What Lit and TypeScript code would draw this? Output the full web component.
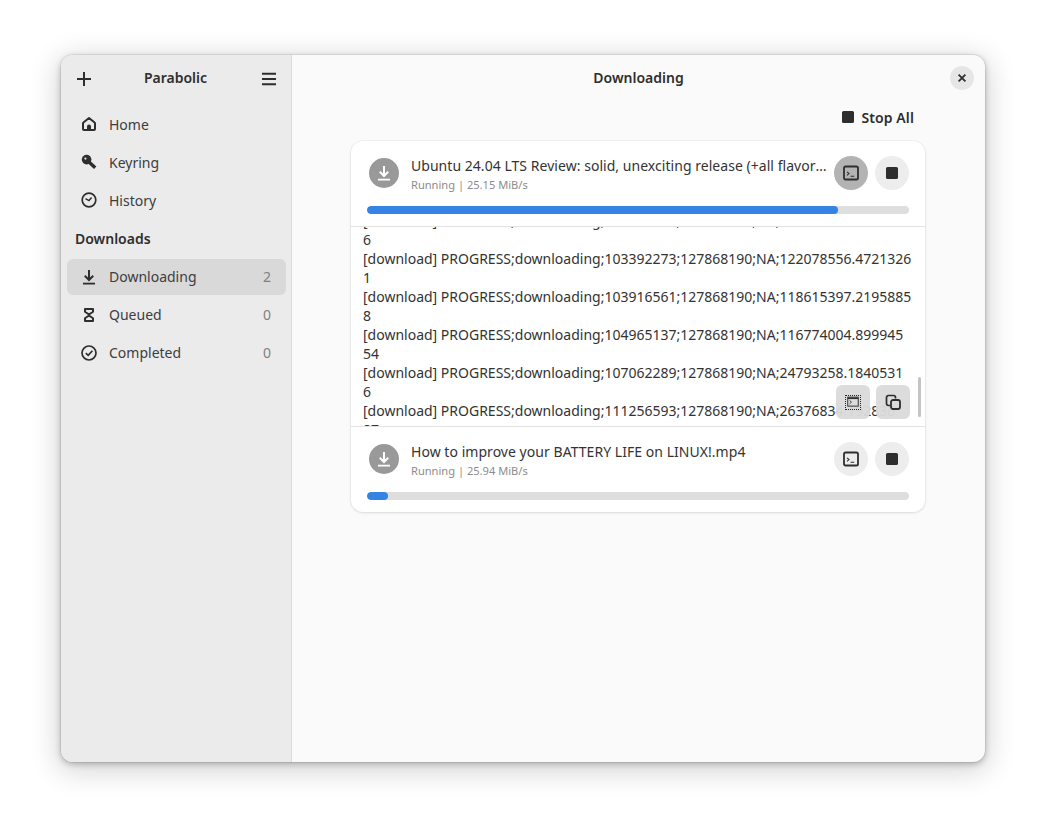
import { LitElement, html, css, svg } from "lit";
import { customElement } from "lit/decorators.js";

const icon = (body: unknown, size = 16) => html`<svg class="ic" width=${size} height=${size} viewBox="0 0 16 16" fill="none" stroke="currentColor" stroke-width="2">${body}</svg>`;

const plus = svg`<path d="M8 1v14M1 8h14"/>`;
const menu = svg`<path d="M1 2.700h14M1 8h14M1 13.300h14"/>`;
const home = svg`<path d="M8 2 2.400 6.500a1 1 0 0 0-.4.800V13a1 1 0 0 0 1 1h10a1 1 0 0 0 1-1V7.300a1 1 0 0 0-.4-.8z" stroke-width="2" stroke-linejoin="round"/><path d="M6 14v-3.500a2 2 0 0 1 4 0V14z" fill="currentColor" stroke="none"/>`;
const key = svg`<circle cx="5.600" cy="5.600" r="4.800" fill="currentColor" stroke="none"/><path d="M8 8l6.200 5.800" stroke-width="3.400"/><circle cx="4.400" cy="4.600" r="1.100" fill="#ebebeb" stroke="none"/>`;
const clock = svg`<circle cx="8" cy="8" r="6.800" stroke-width="1.700"/><path d="M4.500 6.600 8 8.600l2.600-3" stroke-width="1.500"/>`;
const down = svg`<path d="M8 1v9.500M3.800 6.800 8 11l4.200-4.200" stroke-width="2"/><path d="M2 14.600h12" stroke-width="1.800"/>`;
const glass = svg`<path d="M4 2h8v2.700L8 7.500 4 4.700zM4 14h8v-2.700L8 8.500 4 11.300z" stroke-width="2" stroke-linejoin="round"/>`;
const check = svg`<circle cx="8" cy="8" r="7" stroke-width="1.700"/><path d="M4.800 8.200 7.200 10.400 11.400 5.800" stroke-width="1.700"/>`;
const term = svg`<rect x="1" y="1.500" width="14" height="13" rx="1.600" stroke-width="1.800"/><path d="M4 6.800l2 1.800-2 1.800" stroke-width="1.100"/><path d="M7.600 11.200h3.600" stroke-width="1.100"/>`;
const termSmall = svg`<rect x="1" y="1.500" width="14" height="12" stroke-width="1.300"/><path d="M1 3h14" stroke-width="2.200"/><path d="M3.500 6l2.400 2.200-2.400 2.200" stroke-width="1.200"/>`;
const stop = svg`<rect x="2" y="2" width="12" height="12" rx="1.600" fill="currentColor" stroke="none"/>`;
const copy = svg`<path d="M5 11.500H3.400A1.900 1.900 0 0 1 1.500 9.600V3.400a1.900 1.900 0 0 1 1.900-1.900h5.200A1.900 1.900 0 0 1 10.500 3.400V4.500" stroke-width="1.700"/><rect x="6" y="6" width="9" height="9" rx="2" stroke-width="1.800"/>`;
const close = svg`<path d="M3.500 3.500l9 9M12.500 3.500l-9 9" stroke-width="2.400"/>`;

const LOG = [
  "[download] PROGRESS;downloading;102343697;127868190;NA;120412355.2210541",
  "6",
  "[download] PROGRESS;downloading;103392273;127868190;NA;122078556.4721326",
  "1",
  "[download] PROGRESS;downloading;103916561;127868190;NA;118615397.2195885",
  "8",
  "[download] PROGRESS;downloading;104965137;127868190;NA;116774004.899945",
  "54",
  "[download] PROGRESS;downloading;107062289;127868190;NA;24793258.1840531",
  "6",
  "[download] PROGRESS;downloading;111256593;127868190;NA;26376834.192836",
  "87",
];

@customElement("app-root")
export class AppRoot extends LitElement {
  static styles = css`
    :host {
      display: block;
      padding: 55px 61px;
      background: #fff;
      font-family: "Noto Sans", sans-serif;
      font-size: 14px;
      color: #2e2e2e;
    }
    .ic { display: block; flex: none; }
    .window {
      width: 924px;
      height: 707px;
      display: flex;
      border-radius: 12px;
      overflow: hidden;
      background: #fafafa;
      box-shadow: 0 0 0 1px rgba(0,0,0,.06), 0 2px 6px rgba(0,0,0,.25), 0 6px 28px 4px rgba(0,0,0,.16);
    }
    .sidebar {
      width: 230px;
      flex: none;
      background: #ebebeb;
      border-right: 1px solid #dcdcdc;
      display: flex;
      flex-direction: column;
    }
    .side-head {
      height: 47px;
      box-sizing: border-box;
      padding: 0 14px 2px 15px;
      display: flex;
      align-items: center;
      justify-content: space-between;
      font-weight: 600;
      font-size: 14px;
      color: #2e2e2e;
    }
    .side-head .ic { margin-top: 2px; }
    .side-head span { margin-right: 2px; }
    .nav {
      display: flex;
      flex-direction: column;
      gap: 2px;
      padding: 4px 5px 0 6px;
    }
    .row {
      height: 36px;
      border-radius: 6px;
      display: flex;
      align-items: center;
      padding: 0 15px 0 14px;
      gap: 12px;
      color: #3d3d3d;
    }
    .row.sel { background: #d9d9d9; }
    .row .ic { color: #2e2e2e; }
    .row .label { flex: 1; }
    .row.low .label, .row.low .count { margin-bottom: 2px; }
    .row .count { color: #808080; }
    .heading {
      height: 37px;
      display: flex;
      align-items: center;
      padding-left: 8px;
      font-weight: 600;
      color: #2e2e2e;
    }
    .main {
      flex: 1;
      min-width: 0;
      display: flex;
      flex-direction: column;
    }
    .main-head {
      height: 47px;
      box-sizing: border-box;
      padding-bottom: 2px;
      display: flex;
      align-items: center;
      justify-content: center;
      font-weight: 600;
      position: relative;
    }
    .close {
      position: absolute;
      right: 11px;
      top: 11px;
      width: 24px;
      height: 24px;
      border-radius: 50%;
      background: #e6e6e6;
      display: flex;
      align-items: center;
      justify-content: center;
      color: #2e2e2e;
    }
    .content {
      width: 574px;
      margin: 0 60px 0 59px;
      display: flex;
      flex-direction: column;
    }
    .toolbar {
      height: 39px;
      display: flex;
      justify-content: flex-end;
      align-items: flex-start;
      padding-right: 11px;
    }
    .stop-all {
      display: flex;
      align-items: center;
      gap: 5px;
      height: 30px;
      font-weight: 600;
      color: #2e2e2e;
      letter-spacing: .1px;
    }
    .card {
      background: #fff;
      border-radius: 12px;
      box-shadow: 0 0 0 1px rgba(0,0,0,.03), 0 1px 3px rgba(0,0,0,.1);
      overflow: hidden;
    }
    .item {
      height: 85px;
      box-sizing: border-box;
      padding: 15px 16px 0;
      display: flex;
      flex-direction: column;
      gap: 16px;
    }
    .item-top {
      display: flex;
      align-items: center;
      height: 34px;
    }
    .badge {
      width: 30px;
      height: 30px;
      margin: 0 2px;
      border-radius: 50%;
      background: #999;
      color: #fff;
      display: flex;
      align-items: center;
      justify-content: center;
      flex: none;
    }
    .text {
      flex: 1;
      min-width: 0;
      margin: 0 6px 0 10px;
      padding-top: 4px;
    }
    .title {
      white-space: nowrap;
      overflow: hidden;
      text-overflow: ellipsis;
      line-height: 20px;
      letter-spacing: .04px;
      color: #333;
    }
    .sub {
      font-size: 11.100px;
      line-height: 18px;
      color: #8c8c8c;
    }
    .btns { display: flex; gap: 7px; flex: none; }
    .circle {
      width: 34px;
      height: 34px;
      border-radius: 50%;
      background: #ededed;
      display: flex;
      align-items: center;
      justify-content: center;
      color: #2e2e2e;
    }
    .circle.on { background: #b3b3b3; }
    .trough {
      height: 8px;
      border-radius: 4px;
      background: #dedede;
      overflow: hidden;
    }
    .fill {
      height: 100%;
      border-radius: 4px;
      background: #3584e4;
    }
    .log-wrap {
      position: relative;
      height: 199px;
      overflow: hidden;
      border-top: 1px solid #e3e3e3;
      border-bottom: 1px solid #e3e3e3;
    }
    .log {
      margin-top: -16px;
      padding-left: 12px;
      line-height: 19px;
      color: #333;
      white-space: nowrap;
    }
    .overlay {
      position: absolute;
      top: 158px;
      right: 15px;
      display: flex;
      gap: 6px;
    }
    .square {
      width: 34px;
      height: 34px;
      border-radius: 6px;
      background: rgba(219,219,219,.96);
      display: flex;
      align-items: center;
      justify-content: center;
      color: #2e2e2e;
    }
    .focus {
      border: 1px dotted #222;
      width: 14px;
      height: 13px;
      display: flex;
      align-items: center;
      justify-content: center;
    }
    .scrollbar {
      position: absolute;
      right: 4px;
      top: 150px;
      width: 3px;
      height: 40px;
      border-radius: 2px;
      background: #c4c4c4;
    }
  `;

  private item(title: string, sub: string, pct: number, on: boolean) {
    return html`
      <div class="item">
        <div class="item-top">
          <div class="badge">${icon(down, 16)}</div>
          <div class="text">
            <div class="title">${title}</div>
            <div class="sub">${sub}</div>
          </div>
          <div class="btns">
            <div class="circle ${on ? "on" : ""}">${icon(term)}</div>
            <div class="circle">${icon(stop, 16)}</div>
          </div>
        </div>
        <div class="trough"><div class="fill" style="width:${pct}%"></div></div>
      </div>`;
  }

  private nav(ic: unknown, label: string, count?: string, sel = false) {
    return html`<div class="row ${sel ? "sel" : ""} ${count !== undefined ? "low" : ""}">${icon(ic)}<span class="label">${label}</span>${count !== undefined ? html`<span class="count">${count}</span>` : ""}</div>`;
  }

  render() {
    return html`
      <div class="window">
        <aside class="sidebar">
          <div class="side-head">${icon(plus)}<span>Parabolic</span>${icon(menu)}</div>
          <div class="nav">
            ${this.nav(home, "Home")}
            ${this.nav(key, "Keyring")}
            ${this.nav(clock, "History")}
            <div class="heading">Downloads</div>
            ${this.nav(down, "Downloading", "2", true)}
            ${this.nav(glass, "Queued", "0")}
            ${this.nav(check, "Completed", "0")}
          </div>
        </aside>
        <main class="main">
          <div class="main-head">Downloading<div class="close">${icon(close, 12)}</div></div>
          <div class="content">
            <div class="toolbar"><div class="stop-all">${icon(stop, 16)}<span>Stop All</span></div></div>
            <div class="card">
              ${this.item("Ubuntu 24.04 LTS Review: solid, unexciting release (+all flavors) [4K].mp4", "Running | 25.15 MiB/s", 86.9, true)}
              <div class="log-wrap">
                <div class="log">${LOG.map((l) => html`<div>${l}</div>`)}</div>
                <div class="overlay">
                  <div class="square"><div class="focus">${icon(termSmall, 12)}</div></div>
                  <div class="square">${icon(copy)}</div>
                </div>
                <div class="scrollbar"></div>
              </div>
              ${this.item("How to improve your BATTERY LIFE on LINUX!.mp4", "Running | 25.94 MiB/s", 3.9, false)}
            </div>
          </div>
        </main>
      </div>`;
  }
}
